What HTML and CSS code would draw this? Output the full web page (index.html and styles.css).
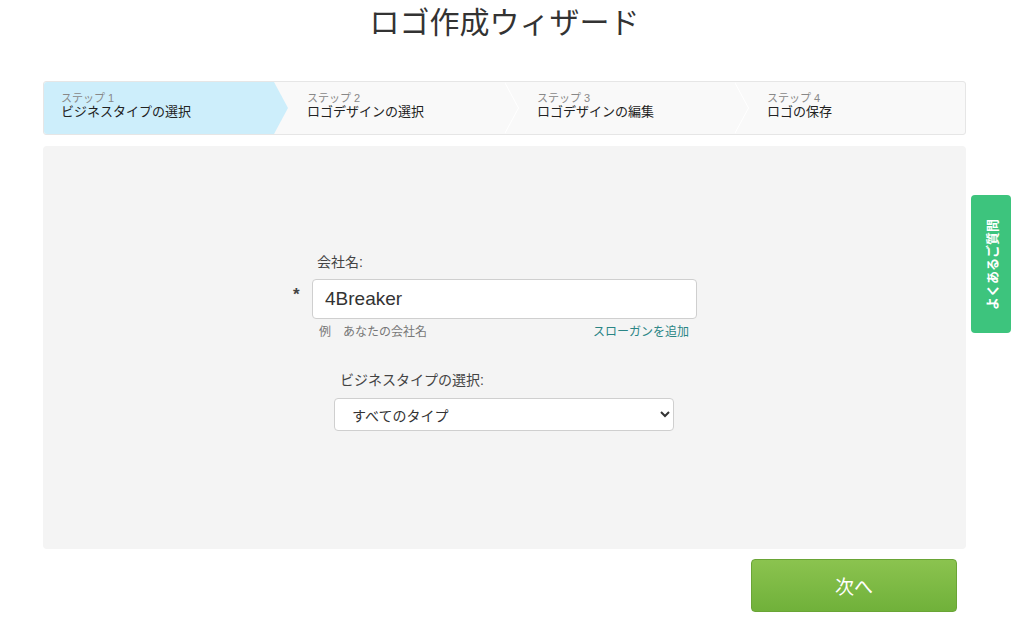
FILE: index.html
```html
<!DOCTYPE html>
<html lang="ja">
<head>
  <meta charset="UTF-8">
  <title>ロゴ作成ウィザード</title>
  <link rel="stylesheet" href="styles.css">
</head>
<body>
<div class="page">
  <h1 class="title">ロゴ作成ウィザード</h1>

  <ol class="steps">
    <li class="step active">
      <span class="step-num">ステップ 1</span>
      <span class="step-name">ビジネスタイプの選択</span>
    </li>
    <li class="step">
      <span class="step-num">ステップ 2</span>
      <span class="step-name">ロゴデザインの選択</span>
    </li>
    <li class="step">
      <span class="step-num">ステップ 3</span>
      <span class="step-name">ロゴデザインの編集</span>
    </li>
    <li class="step last">
      <span class="step-num">ステップ 4</span>
      <span class="step-name">ロゴの保存</span>
    </li>
  </ol>

  <div class="panel">
    <form class="wizard-form">
      <div class="field">
        <label for="company">会社名:</label>
        <div class="input-row">
          <span class="required">*</span>
          <input type="text" id="company" value="4Breaker">
        </div>
        <div class="hint-row">
          <span class="hint">例　あなたの会社名</span>
          <a href="#" class="slogan-link">スローガンを追加</a>
        </div>
      </div>
      <div class="field type-field">
        <label for="type">ビジネスタイプの選択:</label>
        <select id="type">
          <option>すべてのタイプ</option>
        </select>
      </div>
    </form>
  </div>

  <div class="actions">
    <button type="button" class="btn-next">次へ</button>
  </div>
</div>

<a href="#" class="faq-tab"><span>よくあるご質問</span></a>
</body>
</html>
```

FILE: styles.css
```css
* {
  margin: 0;
  padding: 0;
  box-sizing: border-box;
}

body {
  font-family: "Liberation Sans", Arial, "Noto Sans CJK JP", sans-serif;
  background: #fff;
  color: #333;
}

.page {
  width: 923px;
  margin: 0 0 0 43px;
}

.title {
  font-size: 30px;
  font-weight: normal;
  color: #333;
  text-align: center;
  line-height: 46px;
  height: 81px;
}

/* Steps bar */
.steps {
  list-style: none;
  display: flex;
  height: 54px;
  background: #f9f9f9;
  border: 1px solid #e6e6e6;
  border-radius: 3px;
}

.step {
  position: relative;
  width: 230px;
  padding: 10px 0 0 33px;
  display: flex;
  flex-direction: column;
}

.step.active {
  background: #cdeefb;
  padding-left: 17px;
  border-radius: 3px 0 0 3px;
}

.step::before,
.step::after {
  content: "";
  position: absolute;
  top: 0;
  width: 0;
  height: 0;
  border-top: 26px solid transparent;
  border-bottom: 26px solid transparent;
  z-index: 1;
}

.step::before {
  right: -15px;
  border-left: 14px solid #fff;
}

.step::after {
  right: -14px;
  border-left: 14px solid #f9f9f9;
  z-index: 2;
}

.step.active::before {
  right: -14px;
  border-left-color: #cdeefb;
}

.step.active::after {
  display: none;
}

.step.last::before,
.step.last::after {
  display: none;
}

.step-num {
  font-size: 11px;
  color: #888;
  line-height: 12px;
}

.step-name {
  font-size: 13px;
  color: #222;
  line-height: 16px;
}

/* Main panel */
.panel {
  margin-top: 11px;
  height: 403px;
  background: #f4f4f4;
  border-radius: 4px;
  padding-top: 106px;
}

.wizard-form {
  width: 420px;
  margin-left: 246px;
}

.field label {
  display: block;
  font-size: 14px;
  color: #444;
  margin-left: 28px;
  line-height: 20px;
}

.input-row {
  display: flex;
  align-items: center;
  margin-top: 7px;
}

.required {
  width: 23px;
  font-size: 17px;
  font-weight: bold;
  color: #444;
  padding-left: 4px;
  margin-top: -9px;
}

.input-row input {
  width: 385px;
  height: 40px;
  border: 1px solid #cfcfcf;
  border-radius: 4px;
  background: #fff;
  font-family: "Liberation Sans", Arial, sans-serif;
  font-size: 19px;
  color: #333;
  padding: 0 12px;
}

.hint-row {
  display: flex;
  justify-content: space-between;
  margin: 5px 20px 0 30px;
  font-size: 12px;
  line-height: 16px;
}

.hint {
  color: #777;
}

.slogan-link {
  color: #2a8585;
  text-decoration: none;
}

.type-field {
  margin-top: 30px;
}

.type-field label {
  margin-left: 51px;
}

.type-field select {
  display: block;
  margin: 8px 0 0 45px;
  width: 340px;
  height: 33px;
  border: 1px solid #cfcfcf;
  border-radius: 4px;
  background: #fff;
  font-family: "Liberation Sans", Arial, "Noto Sans CJK JP", sans-serif;
  font-size: 14px;
  color: #333;
  padding: 3px 13px 0;
}

/* Next button */
.actions {
  display: flex;
  justify-content: flex-end;
  margin-top: 10px;
  padding-right: 9px;
}

.btn-next {
  width: 206px;
  height: 53px;
  border: 1px solid #6aa536;
  border-radius: 4px;
  background-image: linear-gradient(to bottom, #8bc34f, #70b13a);
  color: #fff;
  font-family: "Liberation Sans", Arial, "Noto Sans CJK JP", sans-serif;
  font-size: 19px;
  cursor: pointer;
}

/* FAQ side tab */
.faq-tab {
  position: fixed;
  right: 2px;
  top: 195px;
  width: 40px;
  height: 138px;
  background: #3dc47d;
  border-radius: 4px;
  display: flex;
  align-items: center;
  justify-content: center;
  text-decoration: none;
}

.faq-tab span {
  display: block;
  transform: rotate(-90deg);
  white-space: nowrap;
  color: #fff;
  font-size: 13px;
  font-weight: bold;
}
```
